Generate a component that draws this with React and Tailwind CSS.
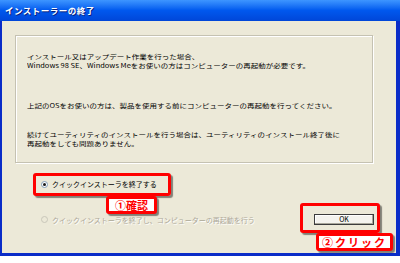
import React from 'react'

const font = { fontFamily: '"Noto Sans CJK JP", "Noto Sans", sans-serif' }

// the reference glyphs are a little squashed vertically
const Line = ({ children, className = '' }) => (
  <div className={`h-[9px] leading-[9px] whitespace-nowrap ${className}`}>
    <span className="inline-block scale-y-[0.8]">{children}</span>
  </div>
)

const Radio = ({ checked, disabled, label }) => (
  <div className="flex items-center h-[10px] ml-[39px] gap-[4px]">
    <span
      className={`w-[7px] h-[7px] rounded-full border flex items-center justify-center ${
        disabled ? 'border-[#C9C7BA] bg-[#ECE9D8]' : 'border-[#7F9DB9] bg-white'
      }`}
    >
      {checked && <span className="w-[3px] h-[3px] rounded-full bg-[#1A1A1A]" />}
    </span>
    <span
      className={`text-[7px] leading-[10px] whitespace-nowrap ${
        disabled ? 'text-[#ACA899] [text-shadow:1px_1px_0_#ffffff]' : 'text-black'
      }`}
    >
      {label}
    </span>
  </div>
)

// red callout frame, transparent or filled label
const Callout = ({ className, children }) => (
  <div
    className={`absolute border-[3px] border-[#FF0000] rounded-[3px] shadow-[2px_2px_1px_rgba(0,0,0,0.45)] ${className}`}
  >
    {children}
  </div>
)

export default function App() {
  return (
    <div className="relative w-[400px] h-[263px] bg-white overflow-hidden" style={font}>
      {/* window */}
      <div className="w-[400px] h-[256px] flex flex-col border-l-2 border-r-4 border-b-[3px] border-[#0A2CC8]">
        {/* title bar */}
        <div className="h-[21px] -ml-[2px] -mr-[4px] flex items-center pl-[5px] bg-gradient-to-b from-[#3D95FF] via-[#0058EE] to-[#0046D8]">
          <span className="text-white font-bold text-[8.5px] tracking-[0.5px] [text-shadow:1px_1px_0_#0A1E7A]">
            インストーラーの終了
          </span>
        </div>

        {/* body */}
        <div className="flex-1 bg-[#ECE9D8] flex flex-col">
          <div className="ml-[13px] mt-[14px] w-[358px] h-[128px] border border-[#C5C2B2] shadow-[inset_1px_1px_0_#ffffff,1px_1px_0_#ffffff] pl-[11px] pt-[16px] text-[7.5px] text-black">
            <Line>インストール又はアップデート作業を行った場合、</Line>
            <Line>Windows 98 SE、Windows Meをお使いの方はコンピューターの再起動が必要です。</Line>
            <Line className="mt-[31px]">上記のOSをお使いの方は、製品を使用する前にコンピューターの再起動を行ってください。</Line>
            <Line className="mt-[20px]">続けてユーティリティのインストールを行う場合は、ユーティリティのインストール終了後に</Line>
            <Line>再起動をしても問題ありません。</Line>
          </div>

          <div className="mt-[16px]">
            <Radio checked label="クイックインストーラを終了する" />
          </div>

          <div className="mt-[25px] flex items-center justify-between pr-[22px]">
            <Radio disabled label="クイックインストーラを終了し、コンピューターの再起動を行う" />
            <button className="w-[60px] h-[11px] border border-[#3C3C3C] bg-[#F4F3EE] shadow-[inset_-1px_-1px_0_#A9A79B,inset_1px_1px_0_#ffffff] text-[7px] leading-[9px] text-black">
              OK
            </button>
          </div>
        </div>
      </div>

      {/* annotations */}
      <Callout className="left-[33px] top-[173px] w-[138px] h-[23px]" />
      <Callout className="left-[106px] top-[196px] w-[51px] h-[18px] bg-white flex items-center justify-center">
        <span className="text-[#FF0000] font-bold text-[11px] leading-none">①確認</span>
      </Callout>
      <Callout className="left-[300px] top-[203px] w-[80px] h-[30px]" />
      <Callout className="left-[316px] top-[233px] w-[77px] h-[18px] bg-white flex items-center justify-center">
        <span className="text-[#FF0000] font-bold text-[11px] leading-none tracking-[2px]">②クリック</span>
      </Callout>
    </div>
  )
}
